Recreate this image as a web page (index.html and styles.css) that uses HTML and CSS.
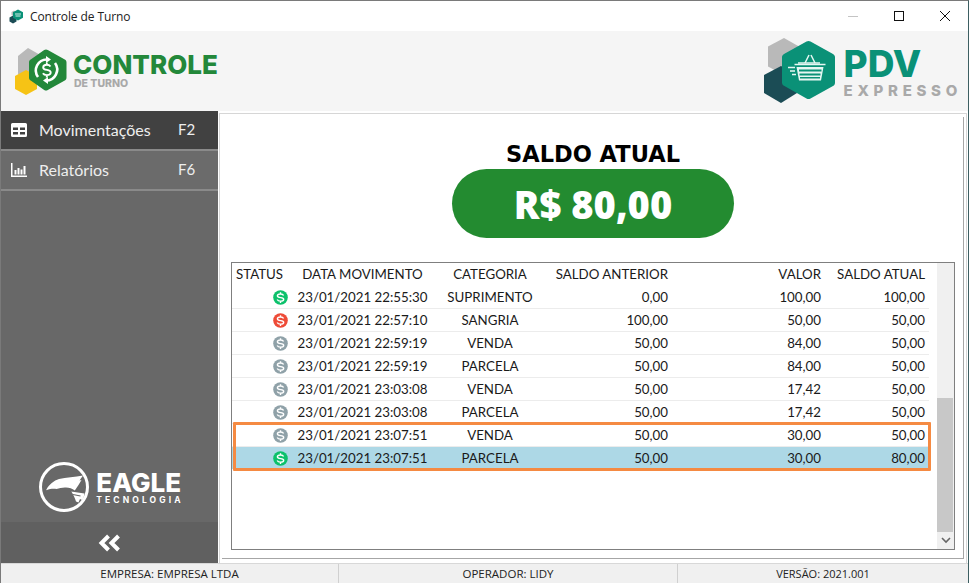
FILE: index.html
```html
<!DOCTYPE html>
<html lang="pt-BR">
<head>
    <meta charset="UTF-8">
    <title>Controle de Turno</title>
    <link rel="stylesheet" href="styles.css">
</head>
<body>
    <svg class="defs" width="0" height="0">
        <symbol id="coin" viewBox="0 0 16 16">
            <circle cx="8" cy="8" r="7.800" fill="currentColor"/>
            <path d="M11.300 5.800C10.800 4.700 9.600 4.200 8 4.200c-1.900 0-3.300.8-3.300 2 0 2.900 6.700 1 6.700 3.700 0 1.200-1.400 2-3.400 2-1.700 0-3-.6-3.500-1.700M8 2.300v1.900M8 11.900v1.900" fill="none" stroke="#fff" stroke-width="1.500"/>
        </symbol>
    </svg>
    <div class="window">
        <div class="titlebar">
            <svg class="app-icon" width="15" height="15" viewBox="0 0 15 15">
                <path d="M4 6.500l3.500 2v4L4 14.500l-3.500-2v-4z" fill="#1b4c55"/>
                <path d="M2.500 3l2.500-1.500L7 3v3L4.500 7 2.500 6z" fill="#b9b9b9"/>
                <path d="M9 .5l5 2.700v5.600l-5 2.700-5-2.700V3.200z" fill="#0a9177"/>
                <path d="M6 4.500h6v1H6zM6.500 6.500h5v1h-5z" fill="#d5f0ea"/>
            </svg>
            <span class="title">Controle de Turno</span>
            <div class="win-buttons">
                <svg width="12" height="12" viewBox="0 0 12 12"><path d="M1 6.500h10" stroke="#c4c4c4"/></svg>
                <svg width="12" height="12" viewBox="0 0 12 12"><rect x="1.500" y="1.500" width="9" height="9" fill="none" stroke="#111"/></svg>
                <svg width="12" height="12" viewBox="0 0 12 12"><path d="M1 1l10 10M11 1L1 11" stroke="#111"/></svg>
            </div>
        </div>

        <header class="banner">
            <div class="logo-controle">
                <svg width="54" height="48" viewBox="0 0 54 48">
                    <path d="M13 1l14 8v16l-14 8-10-6V9z" fill="#b9b9b9"/>
                    <path d="M11 23l11 6v13l-11 6-11-6V29z" fill="#f6c315"/>
                    <path d="M31 2.500c.6 0 1.200.2 1.800.5l17 9.500c1.200.7 1.700 1.500 1.700 3v15c0 1.500-.5 2.300-1.700 3l-17 9.500c-1.200.7-2.400.7-3.600 0l-13.500-9.500c-1.200-.7-1.700-1.500-1.700-3v-15c0-1.500.5-2.300 1.700-3l13.500-9.500c.6-.3 1.200-.5 1.800-.5z" fill="#23883a"/>
                    <path d="M23 30a11 11 0 0 1 9-17.500M40 16a11 11 0 0 1-9 17.500" fill="none" stroke="#fff" stroke-width="2.600"/>
                    <path d="M31 9l5 3.500-5 3.500zM33 30l-5 3.500 5 3.500z" fill="#fff"/>
                    <path d="M35.500 19.500c-.8-1.200-2.200-1.800-3.700-1.800-2.100 0-3.600 1-3.600 2.700 0 3.500 7.500 1.500 7.500 4.900 0 1.700-1.600 2.800-3.800 2.800-1.800 0-3.300-.7-4-1.900M31.800 15.500v3M31.800 27.500v3" fill="none" stroke="#fff" stroke-width="1.900"/>
                </svg>
                <div class="logo-words">
                    <span class="logo-main">CONTROLE</span>
                    <span class="logo-sub">DE TURNO</span>
                </div>
            </div>
            <div class="logo-pdv">
                <svg width="72" height="66" viewBox="0 0 72 66">
                    <path d="M20 0l15 8.500v20L20 37 4 28.500v-20z" fill="#b9b9b9"/>
                    <path d="M17 28l16 9v18l-16 10L0 55V37z" fill="#1b4c55"/>
                    <path d="M44.500 3c.7 0 1.300.2 2 .6l22.500 12.400c1.300.8 2 1.800 2 3.300v25.400c0 1.500-.7 2.500-2 3.300L46.500 60.400c-1.300.8-2.700.8-4 0L20 47.700c-1.300-.8-2-1.800-2-3.300V19.300c0-1.500.7-2.500 2-3.300L42.500 3.600c.7-.4 1.300-.6 2-.6z" fill="#0a9177"/>
                    <g fill="none" stroke="#e6f7f3" stroke-width="1.500">
                        <path d="M41 25l4-8 M51 25l-4-8"/>
                        <path d="M34 25h22"/>
                        <path d="M30.500 26.500h31"/>
                    </g>
                    <path d="M32.500 29h27l-2.500 13.500H35zM35 31.500v2h22.500v-2zM35.500 35.500v2h21v-2zM36 39v1.500h20V39z" fill="#e6f7f3" fill-rule="evenodd"/>
                    <path d="M24 29.500h7M26 33h5M28 36.500h4" fill="none" stroke="#e6f7f3" stroke-width="1.300"/>
                </svg>
                <div class="logo-words pdv-words">
                    <span class="pdv-main">PDV</span>
                    <span class="pdv-sub">EXPRESSO</span>
                </div>
            </div>
        </header>

        <div class="content">
            <aside class="sidebar">
                <a class="menu-item active">
                    <svg width="16" height="14" viewBox="0 0 16 14">
                        <path d="M1.500 0h13A1.500 1.500 0 0 1 16 1.500v11a1.500 1.500 0 0 1-1.500 1.500h-13A1.500 1.500 0 0 1 0 12.500v-11A1.500 1.500 0 0 1 1.500 0zM2 4.500V7h5V4.500zM9 4.500V7h5V4.500zM2 9v2.500h5V9zM9 9v2.500h5V9z" fill="#fff" fill-rule="evenodd"/>
                    </svg>
                    <span class="menu-label">Movimentações</span>
                    <span class="menu-key">F2</span>
                </a>
                <a class="menu-item">
                    <svg width="16" height="14" viewBox="0 0 16 14">
                        <path d="M0 0h1.500v12.500H16V14H0zM3.500 7h2v4.500h-2zM6.500 5h2v6.500h-2zM9.500 6.500h2v5h-2zM12.500 3h2v8.500h-2z" fill="#fff"/>
                    </svg>
                    <span class="menu-label">Relatórios</span>
                    <span class="menu-key">F6</span>
                </a>
                <div class="eagle">
                    <svg width="52" height="52" viewBox="0 0 52 52">
                        <circle cx="26" cy="26" r="23.500" fill="none" stroke="#fff" stroke-width="3"/>
                        <path d="M8.300 28.800C11 23.500 16 19.500 21 18c7-2 16-1.500 24-3.500l-3.500 5 2-.5-3 5-3.700 5.500c-2.500-2-5.500-2.800-8.800-3-3.500-.2-6.500.6-9.500 1.500-3-.4-6-.4-10.200 1.300z" fill="#fff"/>
                        <path d="M33 30.500l13.500 2c-.5 3-1 5-2.500 6.500l-2-1-1.500 3.500-2.500-1c-1-3.500-2.500-6.500-5-10.500z" fill="#fff"/>
                        <path d="M35 33.500l7.500 1.500" fill="none" stroke="#686868" stroke-width="1.200"/>
                    </svg>
                    <div class="eagle-words">
                        <span class="eagle-main">EAGLE</span>
                        <span class="eagle-sub">TECNOLOGIA</span>
                    </div>
                </div>
                <div class="collapse">
                    <svg width="24" height="20" viewBox="0 0 24 20">
                        <path d="M10.500 3L3.500 10l7 7M20.500 3l-7 7 7 7" fill="none" stroke="#fff" stroke-width="4"/>
                    </svg>
                </div>
            </aside>

            <main class="panel">
                <div class="panel-inner">
                    <h1 class="balance-title">SALDO ATUAL</h1>
                    <div class="balance-pill">R$ 80,00</div>

                    <div class="grid-box">
                        <div class="grid-scroll">
                            <table class="grid">
                                <colgroup>
                                    <col class="c-status"><col class="c-date"><col class="c-cat">
                                    <col class="c-prev"><col class="c-value"><col class="c-now">
                                </colgroup>
                                <thead>
                                    <tr>
                                        <th class="left">STATUS</th>
                                        <th>DATA MOVIMENTO</th>
                                        <th>CATEGORIA</th>
                                        <th class="right">SALDO ANTERIOR</th>
                                        <th class="right">VALOR</th>
                                        <th class="right">SALDO ATUAL</th>
                                    </tr>
                                </thead>
                                <tbody>
                                    <tr>
                                        <td class="icon green"><svg><use href="#coin"/></svg></td>
                                        <td>23/01/2021 22:55:30</td><td>SUPRIMENTO</td>
                                        <td class="right">0,00</td><td class="right">100,00</td><td class="right">100,00</td>
                                    </tr>
                                    <tr>
                                        <td class="icon red"><svg><use href="#coin"/></svg></td>
                                        <td>23/01/2021 22:57:10</td><td>SANGRIA</td>
                                        <td class="right">100,00</td><td class="right">50,00</td><td class="right">50,00</td>
                                    </tr>
                                    <tr>
                                        <td class="icon grey"><svg><use href="#coin"/></svg></td>
                                        <td>23/01/2021 22:59:19</td><td>VENDA</td>
                                        <td class="right">50,00</td><td class="right">84,00</td><td class="right">50,00</td>
                                    </tr>
                                    <tr>
                                        <td class="icon grey"><svg><use href="#coin"/></svg></td>
                                        <td>23/01/2021 22:59:19</td><td>PARCELA</td>
                                        <td class="right">50,00</td><td class="right">84,00</td><td class="right">50,00</td>
                                    </tr>
                                    <tr>
                                        <td class="icon grey"><svg><use href="#coin"/></svg></td>
                                        <td>23/01/2021 23:03:08</td><td>VENDA</td>
                                        <td class="right">50,00</td><td class="right">17,42</td><td class="right">50,00</td>
                                    </tr>
                                    <tr>
                                        <td class="icon grey"><svg><use href="#coin"/></svg></td>
                                        <td>23/01/2021 23:03:08</td><td>PARCELA</td>
                                        <td class="right">50,00</td><td class="right">17,42</td><td class="right">50,00</td>
                                    </tr>
                                    <tr>
                                        <td class="icon grey"><svg><use href="#coin"/></svg></td>
                                        <td>23/01/2021 23:07:51</td><td>VENDA</td>
                                        <td class="right">50,00</td><td class="right">30,00</td><td class="right">50,00</td>
                                    </tr>
                                    <tr class="selected">
                                        <td class="icon green"><svg><use href="#coin"/></svg></td>
                                        <td>23/01/2021 23:07:51</td><td>PARCELA</td>
                                        <td class="right">50,00</td><td class="right">30,00</td><td class="right">80,00</td>
                                    </tr>
                                </tbody>
                            </table>
                            <div class="highlight"></div>
                        </div>
                        <div class="scrollbar">
                            <div class="scroll-arrow"></div>
                            <div class="scroll-track"><div class="scroll-thumb"></div></div>
                            <div class="scroll-arrow">
                                <svg width="10" height="7" viewBox="0 0 10 7"><path d="M1 1l4 4 4-4" fill="none" stroke="#666" stroke-width="1.600"/></svg>
                            </div>
                        </div>
                    </div>
                </div>
            </main>
        </div>

        <footer class="statusbar">
            <div class="status-cell s1">EMPRESA: EMPRESA LTDA</div>
            <div class="status-cell s2">OPERADOR: LIDY</div>
            <div class="status-cell s3">VERSÃO: 2021.001</div>
        </footer>
    </div>
</body>
</html>
```

FILE: styles.css
```css
html, body {
    margin: 0;
    padding: 0;
    height: 100%;
}
body {
    font-family: "Open Sans", "Liberation Sans", sans-serif;
    background: #fff;
    color: #111;
    overflow: hidden;
}
.defs {
    position: absolute;
}
.window {
    height: 583px;
    box-sizing: border-box;
    border-top: 1px solid #7a7a7a;
    border-left: 1px solid #7a7a7a;
    border-right: 1px solid #3d5f62;
    display: flex;
    flex-direction: column;
}

/* title bar */
.titlebar {
    height: 30px;
    flex: none;
    display: flex;
    align-items: center;
    padding-left: 8px;
    background: #fff;
}
.title {
    font-size: 12px;
    margin-left: 6px;
    letter-spacing: -0.1px;
    color: #222;
}
.win-buttons {
    margin-left: auto;
    display: flex;
    gap: 34px;
    padding-right: 17px;
}

/* logos */
.banner {
    height: 80px;
    flex: none;
    background: #f5f5f5;
    display: flex;
    justify-content: space-between;
    align-items: center;
    padding: 0 6px 0 14px;
}
.logo-controle, .logo-pdv {
    display: flex;
    align-items: center;
}
.logo-pdv {
    padding-bottom: 1px;
}
.logo-words {
    display: flex;
    flex-direction: column;
}
.logo-main {
    font-family: "Inter", sans-serif;
    font-weight: 800;
    font-size: 26px;
    line-height: 26px;
    color: #23883a;
    margin-left: 4px;
}
.logo-sub {
    font-family: "Inter", sans-serif;
    font-weight: 800;
    font-size: 10.500px;
    line-height: 12px;
    color: #a9a9a9;
    margin-left: 5px;
}
.pdv-words {
    margin-left: 8px;
    padding-top: 3px;
}
.pdv-main {
    font-family: "Inter", sans-serif;
    font-weight: 800;
    font-size: 37px;
    line-height: 36px;
    color: #0a9177;
}
.pdv-sub {
    font-family: "Inter", sans-serif;
    font-weight: 800;
    font-size: 15px;
    line-height: 17px;
    letter-spacing: 4.700px;
    color: #a9a9a9;
}

.content {
    flex: 1;
    display: flex;
    min-height: 0;
}

/* left menu */
.sidebar {
    width: 217px;
    flex: none;
    background: #686868;
    display: flex;
    flex-direction: column;
    color: #eee;
}
.menu-item {
    height: 38px;
    display: flex;
    align-items: center;
    padding-left: 10px;
    border-bottom: 2px solid #8a8a8a;
    background: #6b6b6b;
}
.menu-item.active {
    background: #414141;
}
.menu-label {
    font-family: "Lato", sans-serif;
    font-size: 16px;
    margin-left: 12px;
    margin-bottom: 2px;
    flex: 1;
}
.menu-key {
    font-family: "Lato", sans-serif;
    font-size: 15px;
    margin-bottom: 2px;
    width: 40px;
}
.eagle {
    margin-top: auto;
    display: flex;
    align-items: center;
    justify-content: center;
    height: 52px;
    margin-bottom: 9px;
    padding-left: 3px;
    color: #fff;
}
.eagle-words {
    display: flex;
    flex-direction: column;
    margin-left: 6px;
}
.eagle-main {
    font-family: "Inter", sans-serif;
    font-weight: 800;
    font-size: 26px;
    line-height: 25px;
}
.eagle-sub {
    font-family: "Inter", sans-serif;
    font-weight: 700;
    font-size: 8.500px;
    line-height: 10px;
    letter-spacing: 3.100px;
}
.collapse {
    height: 41px;
    flex: none;
    background: #606060;
    display: flex;
    align-items: center;
    justify-content: center;
}

/* main area */
.panel {
    flex: 1;
    min-width: 0;
    margin: 2px 1px 0 1px;
    border: 1px solid #d6d6d6;
    border-bottom: none;
    padding: 3px 2px 4px 2px;
    display: flex;
}
.panel-inner {
    flex: 1;
    min-width: 0;
    border-right: 1px solid #a6a6a6;
    border-bottom: 1px solid #a6a6a6;
    display: flex;
    flex-direction: column;
    align-items: center;
    padding: 22px 8px 8px 9px;
}
.balance-title {
    font-family: "DejaVu Sans", sans-serif;
    font-weight: 700;
    font-size: 22.500px;
    line-height: 30px;
    margin: 0;
    color: #000;
}
.balance-pill {
    width: 282px;
    height: 69px;
    border-radius: 35px;
    background: #238b30;
    color: #fff;
    font-family: "Open Sans", sans-serif;
    font-weight: 800;
    font-size: 38px;
    display: flex;
    align-items: center;
    justify-content: center;
}
.grid-box {
    align-self: stretch;
    flex: 1;
    margin-top: 24px;
    border: 1px solid #7f7f7f;
    display: flex;
    min-height: 0;
}
.grid-scroll {
    flex: 1;
    position: relative;
}
.grid {
    width: 697px;
    table-layout: fixed;
    border-collapse: collapse;
    font-family: "Lato", sans-serif;
    font-size: 13.300px;
    color: #1a1a1a;
}
.c-status { width: 60px; }
.c-date { width: 141px; }
.c-cat { width: 114px; }
.c-prev { width: 125px; }
.c-value { width: 153px; }
.c-now { width: 104px; }
.grid th {
    font-weight: 400;
    height: 21px;
    padding: 0 4px 2px;
    text-align: center;
    white-space: nowrap;
}
.grid td {
    height: 22px;
    padding: 0 4px;
    text-align: center;
    white-space: nowrap;
    border-bottom: 1px solid #ececec;
}
.grid .left {
    text-align: left;
}
.grid .right {
    text-align: right;
}
.grid td.icon {
    text-align: right;
    line-height: 0;
    padding-right: 4px;
}
.icon svg {
    width: 15px;
    height: 15px;
}
.green { color: #0cc16b; }
.red { color: #ee4b37; }
.grey { color: #8fa1a8; }
.grid tr.selected td {
    background: #add8e6;
    border-bottom: none;
}
.highlight {
    position: absolute;
    left: 1px;
    top: 159px;
    width: 692px;
    height: 43px;
    border: 3px solid #f58a42;
    border-radius: 1px;
}
.scrollbar {
    width: 17px;
    background: #f0f0f0;
    display: flex;
    flex-direction: column;
}
.scroll-arrow {
    height: 17px;
    flex: none;
    display: flex;
    align-items: center;
    justify-content: center;
}
.scroll-track {
    flex: 1;
    display: flex;
    flex-direction: column;
    justify-content: flex-end;
}
.scroll-thumb {
    height: 134px;
    margin-right: 1px;
    background: #c8c8c8;
}

/* status bar */
.statusbar {
    height: 19px;
    flex: none;
    background: #f0f0f0;
    display: flex;
    font-size: 11.500px;
    line-height: 19px;
    color: #222;
    border-top: 1px solid #d8d8d8;
}
.status-cell {
    text-align: center;
    border-right: 1px solid #d0d0d0;
}
.s1 { width: 337px; }
.s2 { width: 338px; }
.s3 { flex: 1; border-right: none; font-size: 11px; }
```
